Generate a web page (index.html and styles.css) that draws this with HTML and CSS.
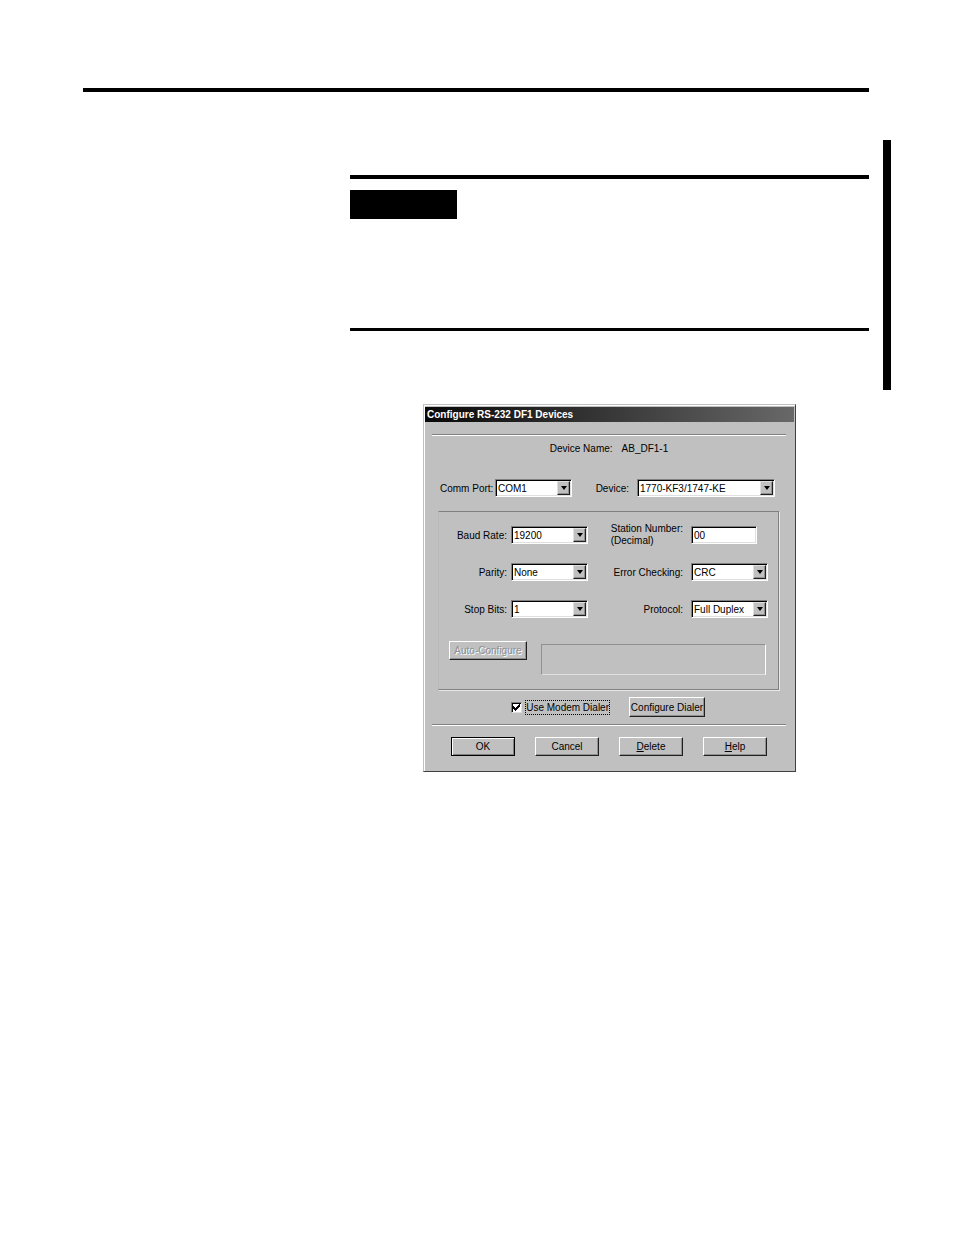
FILE: index.html
```
<!DOCTYPE html>
<html lang="en">

<head>
    <meta charset="UTF-8">
    <meta name="viewport" content="width=device-width, initial-scale=1.0">
    <title>Configure RS-232 DF1 Devices</title>
    <link rel="stylesheet" href="styles.css">
</head>

<body>
    <main class="page">
        <hr class="page-rule">

        <div class="changed">
            <div class="changed-content">
                <div class="note">
                    <div class="note-label"></div>
                </div>
            </div>
            <div class="change-bar"></div>
        </div>

        <form class="dialog" onsubmit="return false;">
            <h1 class="title-bar">Configure RS-232 DF1 Devices</h1>

            <div class="dialog-body">
                <div class="device-name">
                    <span>Device Name:</span>
                    <span>AB_DF1-1</span>
                </div>

                <div class="port-row">
                    <label class="port-label" for="port">Comm Port:</label>
                    <div class="combo">
                        <select id="port"><option>COM1</option></select>
                        <span class="arrow"></span>
                    </div>
                    <label class="device-label" for="device">Device:</label>
                    <div class="combo combo-wide">
                        <select id="device"><option>1770-KF3/1747-KE</option></select>
                        <span class="arrow"></span>
                    </div>
                </div>

                <div class="settings">
                    <div class="fields">
                        <label for="baud">Baud Rate:</label>
                        <div class="combo">
                            <select id="baud"><option>19200</option></select>
                            <span class="arrow"></span>
                        </div>
                        <label class="two-line" for="station">Station Number:<br>(Decimal)</label>
                        <input class="station" type="text" id="station" value="00">

                        <label for="parity">Parity:</label>
                        <div class="combo">
                            <select id="parity"><option>None</option></select>
                            <span class="arrow"></span>
                        </div>
                        <label for="error">Error Checking:</label>
                        <div class="combo">
                            <select id="error"><option>CRC</option></select>
                            <span class="arrow"></span>
                        </div>

                        <label for="stop">Stop Bits:</label>
                        <div class="combo">
                            <select id="stop"><option>1</option></select>
                            <span class="arrow"></span>
                        </div>
                        <label for="protocol">Protocol:</label>
                        <div class="combo">
                            <select id="protocol"><option>Full Duplex</option></select>
                            <span class="arrow"></span>
                        </div>
                    </div>

                    <div class="auto-row">
                        <button class="btn btn-auto" type="button" disabled>Auto-Configure</button>
                        <div class="status"></div>
                    </div>
                </div>

                <div class="modem-row">
                    <div class="check">
                        <input type="checkbox" id="modem" checked>
                        <svg class="tick" viewBox="0 0 7 7" shape-rendering="crispEdges"><path d="M0 2h1v1h1v1h1v-1h1v-1h1v-1h1v-1h1v3h-1v1h-1v1h-1v1h-1v1h-1v-1h-1v-1h-1z"/></svg>
                        <label for="modem">Use Modem Dialer</label>
                    </div>
                    <button class="btn btn-dialer" type="button">Configure Dialer</button>
                </div>

                <div class="buttons">
                    <button class="btn btn-default" type="submit">OK</button>
                    <button class="btn" type="button">Cancel</button>
                    <button class="btn" type="button"><u>D</u>elete</button>
                    <button class="btn" type="button"><u>H</u>elp</button>
                </div>
            </div>
        </form>
    </main>
</body>

</html>
```
FILE: styles.css
```
* {
    box-sizing: border-box;
}

body {
    margin: 0;
    background-color: #fff;
    color: #000;
    font-family: "Liberation Sans", Arial, sans-serif;
    font-size: 10px;
    line-height: 13px;
}

select,
input,
button {
    font: inherit;
    color: inherit;
    margin: 0;
}

label {
    white-space: nowrap;
}

.page {
    padding: 88px 63px 0 83px;
}

.page-rule {
    height: 4px;
    margin: 0 22px 48px 0;
    border: 0;
    background-color: #000;
}

/* revised block with the change bar at its right */
.changed {
    display: flex;
    gap: 14px;
    margin-left: 267px;
}

.changed-content {
    flex: 1;
    padding: 35px 0 59px;
}

.note {
    padding: 11px 0 109px;
    border-top: 4px solid #000;
    border-bottom: 3px solid #000;
}

.note-label {
    width: 107px;
    height: 29px;
    background-color: #000;
}

.change-bar {
    width: 8px;
    background-color: #000;
}

/* dialog */
.dialog {
    width: 373px;
    margin: 14px 0 0 340px;
    padding: 2px 1px 1px;
    border: 1px solid #c0c0c0;
    border-right-color: #404040;
    border-bottom-color: #404040;
    background-color: #c0c0c0;
    box-shadow: inset 1px 1px #fff;
}

.title-bar {
    margin: 0;
    padding: 0 2px;
    font-size: 10px;
    font-weight: bold;
    line-height: 15px;
    color: #fff;
    background: linear-gradient(to right, #080808, #686868);
}

.dialog-body {
    padding: 12px 8px 14px 7px;
}

.device-name {
    display: flex;
    justify-content: center;
    gap: 9px;
    height: 35px;
    padding-top: 7px;
    border-top: 1px solid #808080;
    box-shadow: inset 0 1px #fff;
}

.port-row {
    display: flex;
    align-items: center;
    padding: 10px 11px 14px 8px;
}

.port-label {
    width: 55px;
}

.device-label {
    margin: 0 8px 0 auto;
}

.combo {
    position: relative;
    width: 77px;
}

.combo-wide {
    width: 138px;
}

.combo select,
.station {
    display: block;
    width: 100%;
    height: 18px;
    padding: 0 2px;
    appearance: none;
    border: 1px solid #808080;
    border-right-color: #fff;
    border-bottom-color: #fff;
    border-radius: 0;
    outline: none;
    background-color: #fff;
    box-shadow: inset 1px 1px #000, inset -1px -1px #dfdfdf;
}

.arrow {
    position: absolute;
    top: 2px;
    right: 2px;
    bottom: 2px;
    display: flex;
    align-items: center;
    justify-content: center;
    width: 13px;
    border: 1px solid #dfdfdf;
    border-right-color: #202020;
    border-bottom-color: #202020;
    background-color: #c0c0c0;
    box-shadow: inset -1px -1px #909090;
    pointer-events: none;
}

.arrow::after {
    content: "";
    border: 3px solid transparent;
    border-top: 4px solid #000;
    border-bottom: 0;
}

.settings {
    margin: 0 7px 0 6px;
    padding: 14px 10px;
    border: 1px solid #808080;
    border-left-color: #b8b8b8;
    box-shadow: 1px 1px #e8e8e8;
}

.fields {
    display: grid;
    grid-template-columns: 58px 77px 95px 77px;
    grid-auto-rows: 18px;
    column-gap: 4px;
    row-gap: 19px;
    align-items: center;
    justify-items: end;
}

.fields label:nth-of-type(even) {
    margin-right: 4px;
}

.two-line {
    line-height: 12px;
}

.station {
    width: 66px;
    justify-self: start;
}

.auto-row {
    display: flex;
    align-items: flex-start;
    gap: 14px;
    padding-top: 23px;
}

.status {
    flex: 1;
    height: 31px;
    margin: 3px 2px 0 0;
    border: 1px solid #909090;
    border-right-color: #fff;
    border-bottom-color: #dfdfdf;
}

.btn {
    width: 64px;
    height: 19px;
    padding: 0;
    border: 1px solid #fff;
    border-right-color: #202020;
    border-bottom-color: #202020;
    border-radius: 0;
    background-color: #c0c0c0;
    box-shadow: inset -1px -1px #909090;
    line-height: 13px;
    white-space: nowrap;
}

.btn-auto {
    width: 78px;
}

.btn-auto:disabled {
    color: #909090;
    text-shadow: 1px 1px #fff;
}

.btn-dialer {
    width: 76px;
    height: 20px;
}

.btn-default {
    border-color: #000;
    box-shadow: inset 1px 1px #fff, inset -1px -1px #808080;
}

.modem-row {
    display: flex;
    align-items: center;
    justify-content: flex-end;
    gap: 20px;
    padding: 7px 81px 7px 0;
    border-bottom: 1px solid #808080;
    box-shadow: 0 1px #fff;
}

.check {
    position: relative;
    display: flex;
    align-items: center;
    gap: 4px;
}

.check input {
    width: 11px;
    height: 11px;
    appearance: none;
    border: 1px solid #808080;
    border-right-color: #dfdfdf;
    border-bottom-color: #dfdfdf;
    background-color: #fff;
    box-shadow: inset 1px 1px #000;
}

.tick {
    position: absolute;
    left: 2px;
    top: 3px;
    width: 7px;
    height: 7px;
    pointer-events: none;
}

.check input:not(:checked) + .tick {
    display: none;
}

.check label {
    outline: 1px dotted #000;
}

.buttons {
    display: flex;
    justify-content: center;
    gap: 20px;
    padding-top: 12px;
}
```
